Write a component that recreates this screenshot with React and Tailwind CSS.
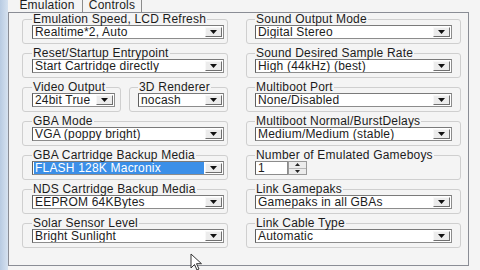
import React from 'react';

// Small black down-triangle used on every combo button
const Arrow = () => (
  <svg width="7" height="4" viewBox="0 0 7 4">
    <path d="M0 0h7L3.5 4z" fill="#111" />
  </svg>
);

const Combo = ({ value, selected = false }) => (
  <div className="flex h-[14px] border border-[#8c8c8c] border-l-[#5e5e5e] border-t-[#7a7a7a] bg-white">
    <div className="flex-1 min-w-0 flex items-stretch px-[1px]">
      <span
        className={`flex-1 flex items-center px-[1px] whitespace-nowrap overflow-hidden leading-[12px] ${
          selected ? 'bg-[#3b8fe8] text-white' : ''
        }`}
      >
        {value}
      </span>
    </div>
    <div className="w-[17px] my-[1px] mr-[1px] flex items-center justify-center bg-[#ececec] border border-[#f8f8f8] border-r-[#6f6f6f] border-b-[#6f6f6f]">
      <Arrow />
    </div>
  </div>
);

const Spinner = ({ value }) => (
  <div className="flex h-[14px] w-[52px]">
    <div className="flex-1 flex items-center pl-[2px] bg-white border border-[#8c8c8c] border-l-[#5e5e5e] leading-[12px]">
      {value}
    </div>
    <div className="w-[19px] flex flex-col border border-[#9a9a9a] bg-[#ececec]">
      <div className="flex-1 flex items-center justify-center border-b border-[#b8b8b8]">
        <svg width="5" height="3" viewBox="0 0 5 3">
          <path d="M0 3h5L2.5 0z" fill="#222" />
        </svg>
      </div>
      <div className="flex-1 flex items-center justify-center">
        <svg width="5" height="3" viewBox="0 0 5 3">
          <path d="M0 0h5L2.5 3z" fill="#222" />
        </svg>
      </div>
    </div>
  </div>
);

// Group box with the caption sitting on its top edge
const Group = ({ label, pad = 'pl-[9px] pr-[3px]', className = '', children }) => (
  <fieldset className={`border border-[#cfcfcf] rounded-[3px] pb-[4px] ${pad} ${className}`}>
    <legend className="px-[1px] leading-[12px] whitespace-nowrap">{label}</legend>
    {children}
  </fieldset>
);

const rightPad = 'pl-[8px] pr-[8px]';

export default function App() {
  return (
    <div className="w-[480px] h-[270px] overflow-hidden relative flex bg-[#f4f4f4] text-[12px] tracking-[0.2px] text-[#1c1c1c] font-['Liberation_Sans',Arial,sans-serif]">
      {/* window frame strip on the left */}
      <div className="w-[8px] h-full bg-gradient-to-r from-[#b8cbe2] to-[#d6e2f0]" />

      <div className="w-[461px] flex flex-col">
        {/* tab strip */}
        <div className="h-[12px] flex items-end">
          <div className="ml-[4px] w-[71px] h-full flex items-end justify-center pb-[1px] border-r border-[#8c8c8c] relative z-10 bg-[#f4f4f4]">
            <span className="leading-[11px]">Emulation</span>
          </div>
          <div className="w-[59px] h-full flex items-end justify-center pb-[1px] border-r border-[#8c8c8c] text-[#222]">
            <span className="leading-[11px]">Controls</span>
          </div>
        </div>

        {/* tab page */}
        <div className="h-[254px] border border-[#8a8d95] pl-[13px] pr-[7px] flex gap-[18px]">
          {/* left column */}
          <div className="w-[206px] flex flex-col gap-[3px]">
            <Group label="Emulation Speed, LCD Refresh">
              <Combo value="Realtime*2, Auto" />
            </Group>
            <Group label="Reset/Startup Entrypoint">
              <Combo value="Start Cartridge directly" />
            </Group>
            <div className="flex gap-[8px]">
              <Group label="Video Output" pad="pl-[9px] pr-[5px]" className="w-[99px]">
                <Combo value="24bit True" />
              </Group>
              <Group label="3D Renderer" pad="pl-[8px] pr-[3px]" className="w-[99px]">
                <Combo value="nocash" />
              </Group>
            </div>
            <Group label="GBA Mode">
              <Combo value="VGA (poppy bright)" />
            </Group>
            <Group label="GBA Cartridge Backup Media">
              <Combo value="FLASH 128K Macronix" selected />
            </Group>
            <Group label="NDS Cartridge Backup Media">
              <Combo value="EEPROM 64KBytes" />
            </Group>
            <Group label="Solar Sensor Level">
              <Combo value="Bright Sunlight" />
            </Group>
          </div>

          {/* right column */}
          <div className="w-[215px] flex flex-col gap-[3px]">
            <Group label="Sound Output Mode" pad={rightPad}>
              <Combo value="Digital Stereo" />
            </Group>
            <Group label="Sound Desired Sample Rate" pad={rightPad}>
              <Combo value="High (44kHz) (best)" />
            </Group>
            <Group label="Multiboot Port" pad={rightPad}>
              <Combo value="None/Disabled" />
            </Group>
            <Group label="Multiboot Normal/BurstDelays" pad={rightPad}>
              <Combo value="Medium/Medium (stable)" />
            </Group>
            <Group label="Number of Emulated Gameboys" pad={rightPad}>
              <Spinner value="1" />
            </Group>
            <Group label="Link Gamepaks" pad={rightPad}>
              <Combo value="Gamepaks in all GBAs" />
            </Group>
            <Group label="Link Cable Type" pad={rightPad}>
              <Combo value="Automatic" />
            </Group>
          </div>
        </div>
      </div>

      {/* mouse pointer over the page */}
      <svg className="absolute left-[190px] top-[253px]" width="14" height="18" viewBox="0 0 14 18">
        <path d="M1 1v14l3.5-3.5 2.5 5.5 2-1-2.5-5.3H11.5z" fill="#fff" stroke="#333" strokeWidth="1" strokeLinejoin="round" />
      </svg>
    </div>
  );
}
